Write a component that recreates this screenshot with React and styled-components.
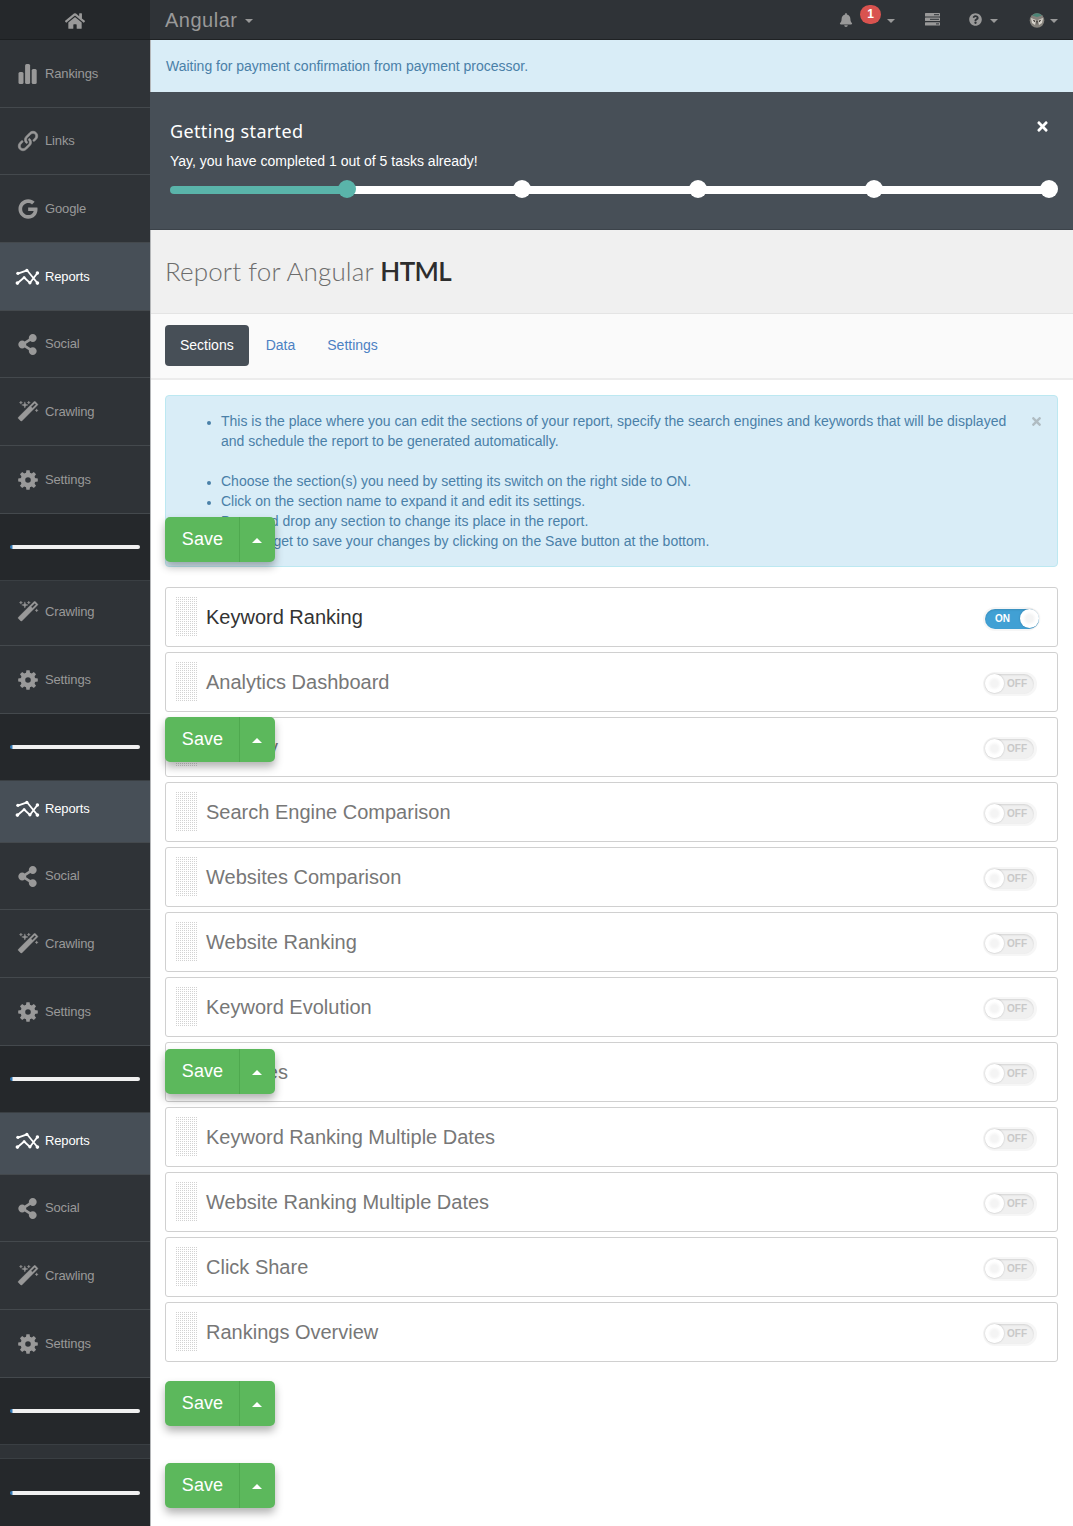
import React from 'react';
import styled, { createGlobalStyle, css } from 'styled-components';
import { FaGoogle, FaShareAlt, FaBell, FaQuestionCircle, FaTimes, FaHome } from 'react-icons/fa';
import { ImLink } from 'react-icons/im';

const Global = createGlobalStyle`
  *{box-sizing:border-box}
  body{margin:0;background:#fff;font:14px/20px "Liberation Sans",Arial,sans-serif;color:#333}
  button{font-family:inherit}
`;
const Shell = styled.div`display:flex;width:1073px;height:1526px;overflow:hidden;`;
const Sidebar = styled.nav`width:150px;flex:none;background:#2f3337;display:flex;flex-direction:column;`;
const Home = styled.div`
  height:40px;flex:none;display:flex;align-items:center;justify-content:center;color:#999;
  background:#25282b;border-bottom:1px solid #1c1f21;padding-top:2px;
`;
const Item = styled.a`
  height:${p => p.$h}px;flex:none;display:flex;align-items:flex-end;gap:5px;
  padding:0 0 22px 15px;border-bottom:1px solid #44494d;
  color:${p => (p.$active ? '#fff' : '#999')};
  background:${p => (p.$active ? '#474f57' : '#2f3337')};
  font-size:13px;line-height:22px;letter-spacing:-.14px;
`;
const Icon = styled.span`
  width:25px;height:22px;display:flex;align-items:center;justify-content:center;
  svg{display:block}
`;
const LinkIcon = styled(ImLink)`stroke:currentColor;stroke-width:.5px;overflow:visible;`;
const Meter = styled.div`
  height:${p => p.$h}px;flex:none;background:#25282b;border-bottom:1px solid #3a3f43;
  display:flex;align-items:center;padding:0 10px;
`;
const Track = styled.div`height:4px;flex:1;border-radius:2px;background:linear-gradient(90deg,#337ab7 0 2px,#f1f1f1 3px);`;
const Gap = styled.div`height:14px;flex:none;border-bottom:1px solid #3a3f43;`;

const Main = styled.main`flex:1;min-width:0;display:flex;flex-direction:column;border-left:1px solid #b5b7b9;`;
const TopBar = styled.header`
  height:40px;flex:none;margin-left:-1px;background:#2f3337;border-bottom:1px solid #1f2224;
  display:flex;align-items:center;padding:0 15px;color:#999;
`;
const Brand = styled.div`font-size:20px;letter-spacing:.5px;display:flex;align-items:center;gap:8px;flex:1;`;
const Caret = styled.i`
  display:block;width:0;height:0;border:4px solid transparent;
  ${p => (p.$up
    ? css`border-bottom-color:#fff;border-top:0;border-left-width:5px;border-right-width:5px;border-bottom-width:5px;`
    : css`border-top-color:currentColor;border-bottom:0;margin-top:3px;`)}
`;
const Tool = styled.div`display:flex;align-items:center;gap:${p => p.$gap || 8}px;margin-right:${p => p.$mr || 0}px;`;
const Badge = styled.span`
  width:21px;height:19px;border-radius:10px;background:#d9534f;color:#fff;font-weight:700;font-size:12px;line-height:19px;
  text-align:center;margin:-11px -2px 0 -1px;
`;
const Notice = styled.div`height:52px;flex:none;background:#d9edf7;color:#4a80a8;padding:16px 15px;`;
const Started = styled.section`
  height:138px;flex:none;margin-left:-1px;background:#474f57;color:#fff;padding:27px 15px 0 20px;border-bottom:1px solid #3c434a;
`;
const StartedHead = styled.div`display:flex;justify-content:space-between;padding-right:8px;height:24px;`;
const StartedTitle = styled.h4`margin:0;font:400 18px/24px "Noto Sans",sans-serif;letter-spacing:.35px;`;
const StartedText = styled.p`margin:8px 0 0;line-height:20px;`;
const Steps = styled.div`height:18px;margin-top:9px;display:flex;align-items:center;`;
const Step = styled.div`
  width:${p => p.$w}px;height:18px;display:flex;align-items:center;
  &::before{content:'';flex:1;height:8px;margin:2px -4px 0 ${p => (p.$first ? 0 : -4)}px;background:${p => p.$c};border-radius:${p => (p.$first ? '4px 0 0 4px' : 0)};}
  &::after{content:'';width:18px;height:18px;border-radius:50%;background:${p => p.$c};z-index:1;}
`;
const Title = styled.h1`
  margin:0;height:84px;flex:none;background:#f0f0f0;border-bottom:1px solid #e4e4e4;padding:24px 15px 0 14px;
  font:300 26px/34px Lato,sans-serif;color:#6c6c6c;letter-spacing:.12px;white-space:nowrap;
  b{font-weight:600;letter-spacing:-.6px;color:#2d2d2d}
`;
const Tabs = styled.div`height:66px;flex:none;background:#fafafa;border-bottom:2px solid #ececec;padding:11px 14px;display:flex;gap:2px;`;
const Tab = styled.a`
  height:41px;padding:10px 15px;border-radius:4px;
  color:${p => (p.$active ? '#fff' : '#4c81c3')};background:${p => (p.$active ? '#474f57' : 'none')};
`;
const Body = styled.div`position:relative;padding:15px 15px 0 14px;`;
const Info = styled.div`
  height:172px;background:#d9edf7;border:1px solid #bce8f1;border-radius:4px;color:#4a80a8;
  padding:15px 14px 15px 15px;display:flex;justify-content:space-between;
  ul{margin:0;padding:0 0 0 40px}
  li::marker{font-size:12px}
  li:first-child{margin-bottom:20px}
`;
const Close = styled.span`color:#b0bcc2;height:20px;display:flex;align-items:center;`;
const List = styled.div`margin-top:20px;display:flex;flex-direction:column;gap:5px;`;
const Row = styled.div`
  height:60px;border:1px solid #d0d0d0;border-radius:3px;background:#fff;display:flex;align-items:center;
  padding:0 18px 0 10px;font-size:20px;color:${p => (p.$on ? '#333' : '#777')};
`;
const Grip = styled.span`
  width:21px;height:39px;margin:-2px 9px 0 0;
  background:repeating-linear-gradient(90deg,transparent 0 1px,#fff 1px 2px),repeating-linear-gradient(180deg,#d2d2d2 0 1px,#fff 1px 2px);
`;
const Name = styled.span`flex:1;`;
const Switch = styled.span`
  width:${p => (p.$on ? 56 : 54)}px;height:24px;margin:3px ${p => (p.$on ? 0 : 2)}px 0 0;border-radius:12px;background:#f6f6f6;padding:2px;display:flex;
`;
const Pill = styled.span`
  flex:1;height:20px;border-radius:10px;display:flex;align-items:center;justify-content:space-between;
  flex-direction:${p => (p.$on ? 'row' : 'row-reverse')};
  font-size:10px;font-weight:700;
  padding:${p => (p.$on ? '0 0 0 10px' : '0 7px 0 0')};
  margin-right:${p => (p.$on ? -2 : 1)}px;
  color:${p => (p.$on ? '#fff' : '#c8c8c8')};
  background:${p => (p.$on ? '#41a0d4' : '#f0f0f0')};
  box-shadow:inset 0 1px 2px rgba(0,0,0,.12);
  &::after{content:'';width:19px;height:19px;border-radius:50%;background:radial-gradient(circle,#f4f4f4 25%,#fff 50%);box-shadow:0 0 2px rgba(0,0,0,.25)}
`;
const SaveGroup = styled.div`
  display:flex;width:110px;height:45px;border-radius:5px;background:#5cb85c;box-shadow:0 5px 9px rgba(0,0,0,.3);
  ${p => (p.$float !== undefined
    ? css`position:absolute;left:14px;top:${p.$float}px;`
    : css`margin-top:${p.$mt}px;`)}
`;
const SaveMain = styled.button`
  width:75px;border:0;border-right:1px solid #4fa94f;background:none;color:#fff;font-size:18px;letter-spacing:.1px;padding:0 0 1px 1px;
`;
const SaveMore = styled.button`flex:1;border:0;background:none;padding:2px 1px 0 0;display:flex;align-items:center;justify-content:center;`;

const Bars = () => (
  <svg width="20" height="21" viewBox="1 0 20 21" fill="currentColor">
    <rect x="1.500" y="8" width="5" height="12" rx="1.5" /><rect x="8.100" y="0" width="5" height="20" rx="1.5" /><rect x="14.700" y="5" width="5" height="15" rx="1.5" />
  </svg>
);
const Chart = () => (
  <svg width="26" height="18" viewBox="0 0 26 18" fill="none" stroke="currentColor" strokeWidth="1.9">
    <path d="M3 5.5 12.5 2 23.5 15.5M2.5 15.5 9.5 9.5 15.5 15.2 23.5 4.5" />
    <g fill="currentColor" stroke="none">
      <circle cx="3" cy="5.2" r="1.7" /><circle cx="12.3" cy="2.2" r="1.7" /><circle cx="23.3" cy="15.3" r="1.9" />
      <circle cx="2.5" cy="15.3" r="1.9" /><circle cx="9.5" cy="9.7" r="1.5" /><circle cx="15.5" cy="15" r="1.7" /><circle cx="23.3" cy="4.8" r="1.8" />
    </g>
  </svg>
);
const Cog = () => (
  <svg width="20" height="20" viewBox="-10 -10 20 20" fill="currentColor">
    <circle r="5.1" fill="none" stroke="currentColor" strokeWidth="4.600" />
    {[0, 45, 90, 135, 180, 225, 270, 315].map(a => (
      <path key={a} d="M-2.100-6.500-1.600-9.800h3.200L2.100-6.500Z" transform={`rotate(${a})`} />
    ))}
  </svg>
);
const Wand = () => (
  <svg width="22" height="22" viewBox="0 0 1792 1792" fill="currentColor" stroke="currentColor" strokeWidth="30">
    <path d="M1254 581l293-293-107-107-293 293zm447-293q0 27-18 45l-1286 1286q-18 18-45 18t-45-18l-198-198q-18-18-18-45t18-45l1286-1286q18-18 45-18t45 18l198 198q18 18 18 45zm-1351-190l98 30-98 30-30 98-30-98-98-30 98-30 30-98zm350 162l196 60-196 60-60 196-60-196-196-60 196-60 60-196zm930 478l98 30-98 30-30 98-30-98-98-30 98-30 30-98zm-640-640l98 30-98 30-30 98-30-98-98-30 98-30 30-98z" />
  </svg>
);
const TasksIcon = () => (
  <svg width="15" height="13" viewBox="0 0 15 13">
    <g fill="#999"><rect width="15" height="3.4" rx=".5" /><rect y="4.6" width="15" height="3.4" rx=".5" /><rect y="9.2" width="15" height="3.4" rx=".5" /></g>
    <g fill="#2f3337"><rect x="9" y="1.2" width="5" height="1" /><rect x="5" y="5.8" width="9" height="1" /><rect x="11" y="10.4" width="3" height="1" /></g>
  </svg>
);
const Avatar = () => (
  <svg width="16" height="16" viewBox="0 0 16 16">
    <circle cx="8" cy="8.5" r="7.3" fill="#85827c" /><path d="M3 3.5Q8-1 13 3.5L8 5Z" fill="#4c8577" />
    <path d="M2 6 7 8 6 13 3 11ZM14 6 9 8 10 13 13 11Z" fill="#d8d4cc" /><path d="M3.5 7.5l3 1.2-1 1.5zM12.500 7.500l-3 1.200 1 1.500zM7.300 9h1.400L8 13z" fill="#35302d" />
  </svg>
);

const icons = {
  Rankings: <Bars />, Links: <LinkIcon size={20} />, Google: <FaGoogle size={20} />, Reports: <Chart />,
  Social: <FaShareAlt size={21} />, Crawling: <Wand />, Settings: <Cog />,
};
const nav = [
  ['Rankings', 68], ['Links', 67], ['Google', 68], ['Reports', 68], ['Social', 67], ['Crawling', 68], ['Settings', 68], ['meter', 67],
  ['Crawling', 65], ['Settings', 68], ['meter', 67],
  ['Reports', 62], ['Social', 67], ['Crawling', 68], ['Settings', 68], ['meter', 67],
  ['Reports', 62], ['Social', 67], ['Crawling', 68], ['Settings', 68], ['meter', 67], ['gap', 14], ['meter', 68],
];
const sections = [
  'Keyword Ranking', 'Analytics Dashboard', 'Visibility', 'Search Engine Comparison', 'Websites Comparison', 'Website Ranking',
  'Keyword Evolution', 'Websites', 'Keyword Ranking Multiple Dates', 'Website Ranking Multiple Dates', 'Click Share', 'Rankings Overview',
];

function NavEntry({ kind, h }) {
  if (kind === 'meter') return <Meter $h={h}><Track /></Meter>;
  if (kind === 'gap') return <Gap />;
  return <Item $h={h} $active={kind === 'Reports'}><Icon>{icons[kind]}</Icon>{kind}</Item>;
}
function Save(props) {
  return <SaveGroup {...props}><SaveMain>Save</SaveMain><SaveMore aria-label="More"><Caret $up /></SaveMore></SaveGroup>;
}

export default function App() {
  return (
    <Shell>
      <Global />
      <Sidebar>
        <Home><FaHome size={20} /></Home>
        {nav.map(([kind, h], i) => <NavEntry key={i} kind={kind} h={h} />)}
      </Sidebar>
      <Main>
        <TopBar>
          <Brand>Angular <Caret /></Brand>
          <Tool $mr={30}><FaBell size={14} /><Badge>1</Badge><Caret /></Tool>
          <Tool $mr={29}><TasksIcon /></Tool>
          <Tool $mr={31}><FaQuestionCircle size={13} /><Caret /></Tool>
          <Tool $gap={5}><Avatar /><Caret /></Tool>
        </TopBar>
        <Notice>Waiting for payment confirmation from payment processor.</Notice>
        <Started>
          <StartedHead><StartedTitle>Getting started</StartedTitle><FaTimes size={15} /></StartedHead>
          <StartedText>Yay, you have completed 1 out of 5 tasks already!</StartedText>
          <Steps>
            <Step $w={186} $c="#5ab4aa" $first /><Step $w={175} $c="#fff" /><Step $w={176} $c="#fff" /><Step $w={176} $c="#fff" /><Step $w={175} $c="#fff" />
          </Steps>
        </Started>
        <Title>Report for Angular <b>HTML</b></Title>
        <Tabs><Tab $active>Sections</Tab><Tab>Data</Tab><Tab>Settings</Tab></Tabs>
        <Body>
          <Info>
            <ul>
              <li>This is the place where you can edit the sections of your report, specify the search engines and keywords that will be displayed<br />and schedule the report to be generated automatically.</li>
              <li>Choose the section(s) you need by setting its switch on the right side to ON.</li>
              <li>Click on the section name to expand it and edit its settings.</li>
              <li>Drag and drop any section to change its place in the report.</li>
              <li>Don't forget to save your changes by clicking on the Save button at the bottom.</li>
            </ul>
            <Close><FaTimes size={13} /></Close>
          </Info>
          <List>
            {sections.map((s, i) => (
              <Row key={s} $on={i === 0}><Grip /><Name>{s}</Name><Switch $on={i === 0}><Pill $on={i === 0}>{i === 0 ? 'ON' : 'OFF'}</Pill></Switch></Row>
            ))}
          </List>
          <Save $float={137} />
          <Save $float={337} />
          <Save $float={669} />
          <Save $mt={19} />
          <Save $mt={37} />
        </Body>
      </Main>
    </Shell>
  );
}
